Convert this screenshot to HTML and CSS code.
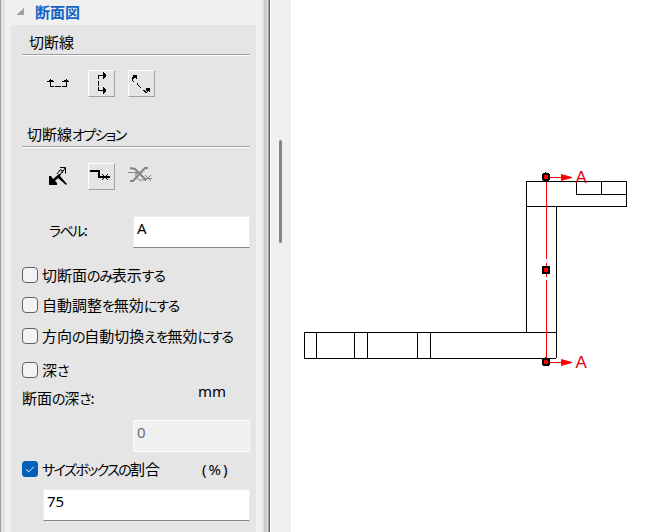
FILE: index.html
```
<!DOCTYPE html>
<html lang="ja">
<head>
    <meta charset="UTF-8">
    <title>断面図</title>
    <link rel="stylesheet" href="styles.css">
</head>
<body>
<div class="app">
    <div class="side">
        <div class="header"><span class="arrow"></span>断面図</div>
        <div class="panel">
            <div class="title first">切断線</div>
            <div class="tools">
                <span class="tool flat">
                    <svg width="27" height="27" shape-rendering="crispEdges">
                        <path d="M2 9h1v8h-1zM1 10h4v1h-4zM-1 11h7v1h-7zM2 16h4v1h-4zM7 16h6v1h-6zM14 16h5v1h-5zM18 9h1v8h-1zM16 10h4v1h-4zM14 11h7v1h-7z"/>
                    </svg>
                </span>
                <span class="tool">
                    <svg width="27" height="27" shape-rendering="crispEdges">
                        <path d="M9 4h7v1h-7zM9 4h1v4h-1zM9 10h1v5h-1zM9 16h1v4h-1zM9 19h7v1h-7zM14 1h1v7h-1zM15 2h1v5h-1zM16 3h1v3h-1zM14 16h1v7h-1zM15 17h1v5h-1zM16 18h1v3h-1z"/>
                    </svg>
                </span>
                <span class="tool">
                    <svg width="27" height="27" shape-rendering="crispEdges">
                        <path d="M4 4h4v4h-1v-1h-3zM3 6h2v2h-2zM3 8h1v2h-1zM4 10h1v1h-1zM8 12h1v2h-1zM9 14h1v1h-1zM10 15h1v1h-1zM11 16h1v1h-1zM14 19h2v1h-2zM15 20h2v1h-2zM16 21h2v1h-2zM17 17h4v4h-1v-1h-3zM18 20h1v1h-1z"/>
                    </svg>
                </span>
            </div>
            <div class="title">切断線<span class="kata">オプション</span></div>
            <div class="tools second">
                <span class="tool flat">
                    <svg width="27" height="27">
                        <path d="M1 13v9h8v-2l-2-2 3-3 8 7 1-1-7-8 1-2h-2l-6 5-2-3z"/>
                        <path d="M9 11l3-4h2v2l-3 4M12 4.500h5.500v6M14 10l3-5" fill="none" stroke="#000"/>
                    </svg>
                </span>
                <span class="tool">
                    <svg width="27" height="27" shape-rendering="crispEdges">
                        <path d="M1 6h10v6h10v2h-12v-6h-8z"/>
                        <path d="M13 10h1v1h1v1h2v-1h1v-1h1v1h-1v1h-1v2h1v1h1v1h-1v-1h-1v-1h-2v1h-1v1h-1v-1h1v-1h1v-2h-1v-1h-1z"/>
                    </svg>
                </span>
                <span class="tool flat">
                    <svg width="27" height="27" fill="none" stroke="#858585">
                        <path d="M2 5l5 1 11 11M2 18h3L17 5h3" stroke-width="2"/>
                        <path d="M7 11l8-3M0 9.500h13M8 11v3l3 3h7M17 12l6 6M23 12l-6 6M18 15.500h6"/>
                    </svg>
                </span>
            </div>
            <div class="field"><span class="name"><span class="kata">ラベル</span>:</span><span class="input">A</span></div>
            <div class="checks">
                <div class="check"><i></i>切断面<span class="kana">のみ</span>表示<span class="kana">する</span></div>
                <div class="check"><i></i>自動調整<span class="kana">を</span>無効<span class="kana">にする</span></div>
                <div class="check way"><i></i>方向<span class="kana">の</span>自動切換<span class="kana">えを</span>無効<span class="kana">にする</span></div>
                <div class="check deep"><i></i>深<span class="kana">さ</span></div>
            </div>
            <div class="depth"><span>断面<span class="kana">の</span>深<span class="kana">さ</span>:</span><span class="unit">mm</span></div>
            <div class="field"><span class="input off">0</span></div>
            <div class="check size">
                <svg width="16" height="16"><rect width="16" height="16" rx="3.500" fill="#005fb8"/><path d="M4 8.300l2.700 2.600 5.200-5.200" fill="none" stroke="#fff"/></svg>
                <span><span class="kata">サイズボックスの</span>割合</span><span class="percent">(%)</span>
            </div>
            <div class="field"><span class="input wide">75</span></div>
        </div>
    </div>
    <div class="split"></div>
    <div class="scroll"><div class="thumb"></div></div>
    <svg class="canvas" width="360" height="532" viewBox="291 0 360 532">
        <g fill="none" stroke="#000" shape-rendering="crispEdges">
            <path d="M526.500 332V181.500H626.500V206.500H526.500M556.500 206V358M556 332.500H304.500V358.500H556"/>
            <path d="M576.500 181V194.500H626M601.500 181V194"/>
            <path d="M316.500 332V358M354.500 332V358M367.500 332V358M417.500 332V358M430.500 332V358"/>
        </g>
        <path d="M546.500 177V259M546.500 263V277M546.500 280V362M546 177.500H562M546 362.500H562" stroke="#f00" shape-rendering="crispEdges"/>
        <path d="M561 174l11 3v1l-11 3zM561 359l11 3v1l-11 3z" fill="#f00"/>
        <g shape-rendering="crispEdges">
            <path d="M543 173h2v-1h1v1h3v1h1v6h-1v1h-2v1h-2v-1h-2v-1h-1v-6h1zM543 358h2v-1h1v1h3v1h1v6h-1v1h-6v-1h-1v-6h1zM542 266h8v8h-8z"/>
            <path d="M544 175h4v4h-4zM544 268h4v4h-4zM544 360h4v4h-4z" fill="#f00"/>
        </g>
        <text x="575.500" y="183">A</text>
        <text x="575.500" y="368">A</text>
    </svg>
</div>
</body>
</html>
```
FILE: styles.css
```
body {
    margin: 0;
    font-family: "Noto Sans", "Noto Sans CJK JP", sans-serif;
    font-size: 15px;
    color: #000;
    background: #fff;
}
.app {
    display: flex;
    width: 651px;
    height: 532px;
    overflow: hidden;
}
.side {
    box-sizing: border-box;
    width: 262px;
    height: 532px;
    padding: 0 6px 0 6px;
    background: #f0f0f0;
    border-left: 1px solid #a0a0a0;
    box-shadow: inset 4px 0 #e3e3e3;
    line-height: 20px;
    font-family: "Noto Sans CJK JP", sans-serif;
    white-space: nowrap;
}
.header {
    display: flex;
    align-items: center;
    box-sizing: border-box;
    height: 25px;
    padding: 0 0 2px 10px;
    color: #1464c8;
    font-weight: bold;
}
.arrow {
    width: 7px;
    height: 7px;
    margin-right: 11px;
    background: linear-gradient(135deg, transparent 50%, #a0a0a0 50%);
}
.panel {
    width: 228px;
    height: 507px;
    margin-left: 4px;
    padding: 0 6px 0 11px;
    background: #e5e5e5;
}
.title {
    box-sizing: border-box;
    height: 30px;
    padding: 7px 0 0 5px;
    border-bottom: 1px solid #a0a0a0;
    box-shadow: 0 1px #fff;
}
.title.first {
    padding: 7px 0 0 7px;
}
.kata {
    font-size: 14px;
    font-feature-settings: "palt";
    letter-spacing: -1.6px;
}
.kana {
    font-size: 14px;
    font-feature-settings: "palt";
    letter-spacing: -1.2px;
}
.tools {
    display: flex;
    gap: 13px;
    height: 47px;
    padding: 15px 0 0 26px;
}
.tools.second {
    height: 53px;
    padding-top: 16px;
}
.tool {
    box-sizing: border-box;
    width: 27px;
    height: 27px;
    overflow: hidden;
    border: 1px solid #fff;
    border-color: #fff #a0a0a0 #a0a0a0 #fff;
}
.tool.flat {
    border: 0;
    overflow: visible;
}
.tool svg {
    display: block;
    overflow: visible;
}
.field {
    display: flex;
    justify-content: flex-end;
    height: 32px;
}
.name {
    flex: 1;
    padding: 4px 0 0 27px;
}
.input {
    box-sizing: border-box;
    width: 117px;
    height: 32px;
    padding: 1px 3px;
    background: #fff;
    border: 1px solid #ececec;
    border-bottom-color: #868686;
    font-family: "Noto Sans", sans-serif;
}
.input.off {
    background: #f0f0f0;
    border-color: #fbfbfb;
    color: #6d6d6d;
}
.input.wide {
    width: 207px;
}
.checks {
    padding-top: 12px;
}
.check {
    display: flex;
    align-items: center;
    height: 30px;
}
.check i {
    box-sizing: border-box;
    width: 16px;
    height: 16px;
    margin-right: 4px;
    border: 1px solid #626262;
    border-radius: 4px;
    background: #f3f3f3;
}
.check svg {
    margin-right: 4px;
}
.way {
    margin-top: 1px;
}
.deep {
    margin-top: 4px;
}
.depth {
    display: flex;
    height: 32px;
    padding-top: 3px;
}
.unit {
    width: 52px;
    margin: -7px 0 0 auto;
    font-family: "Noto Sans", sans-serif;
}
.size {
    height: 34px;
    margin-bottom: 3px;
}
.percent {
    width: 48px;
    margin-left: auto;
    font-family: "Noto Sans", sans-serif;
    letter-spacing: 2px;
}
.split {
    width: 9px;
    background: linear-gradient(90deg, #e3e3e3 2px, #cdcdcd 2px 5px, #e3e3e3 5px 6px, #a0a0a0 6px 7px, #696969 7px 8px, #fff 8px);
}
.scroll {
    width: 20px;
    background: #f0f0f0;
}
.thumb {
    width: 3px;
    height: 103px;
    margin: 140px 0 0 8px;
    border-radius: 2px;
    background: #868686;
}
.canvas {
    display: block;
    background: #fff;
    font-family: "Liberation Sans", sans-serif;
    font-size: 17px;
}
.canvas text {
    fill: #e00010;
}
```
